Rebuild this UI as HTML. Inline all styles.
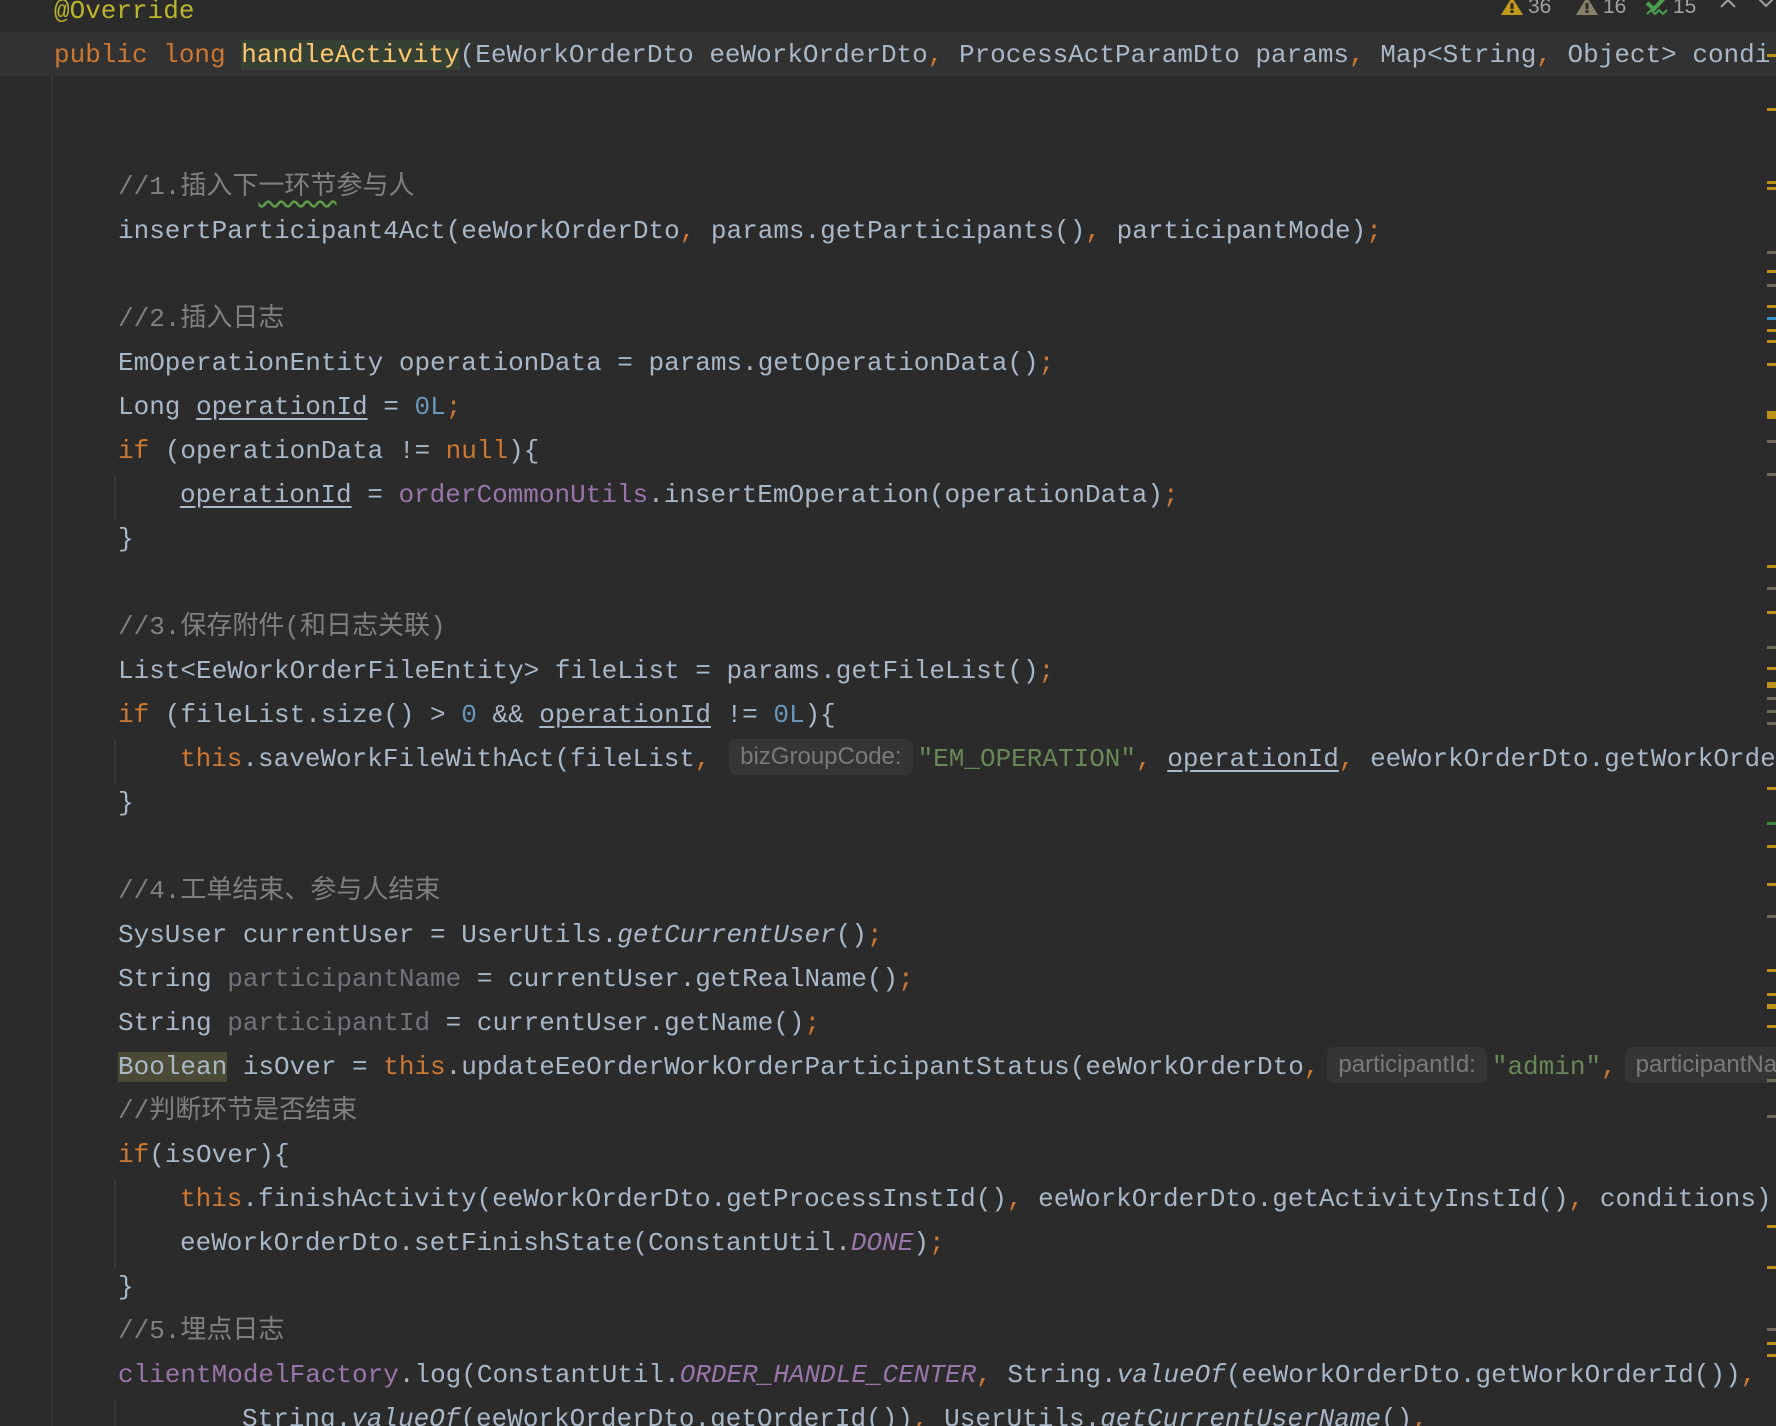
<!DOCTYPE html>
<html><head><meta charset="utf-8">
<style>
html,body{margin:0;padding:0;background:#2b2b2b;}
body{width:1776px;height:1426px;position:relative;overflow:hidden;font-family:"Liberation Mono","Noto Sans CJK SC",monospace;font-size:26px;color:#a9b7c6;}
.wrap{position:absolute;left:0;top:0;width:1776px;height:1426px;overflow:hidden}
.l{position:absolute;left:0;height:44px;line-height:44px;white-space:pre;}
.k{color:#cc7832}.c{color:#808080;font-family:"Liberation Mono","Noto Sans CJK SC",monospace}.a{color:#bbb529}.m{color:#ffc66d}
.n{color:#6897bb}.s{color:#6a8759}.f{color:#9876aa}.i{font-style:italic}.g{color:#72737a}
.u{text-decoration:underline;text-underline-offset:4px}
.h{display:inline-block;font-family:"Liberation Sans",sans-serif;font-size:24px;color:#7a7a7a;background:#353535;border-radius:7px;height:36px;line-height:36px;padding:0 11px;vertical-align:middle;margin:0 5px 0 3px;position:relative;top:-2px}
.guide{position:absolute;width:2px;background:#373737}
.mk{position:absolute;left:1767px;width:9px;height:3px;background:#be9117}
.mg{background:#6e6a5a}
</style></head><body><div class="wrap">
<div style="position:absolute;left:0;top:32px;width:1776px;height:44px;background:#323232"></div>
<div class="guide" style="left:51px;top:76px;height:1351px"></div>
<div class="guide" style="left:114px;top:476px;height:44px"></div>
<div class="guide" style="left:114px;top:740px;height:44px"></div>
<div class="guide" style="left:114px;top:1180px;height:88px"></div>
<div class="guide" style="left:114px;top:1400px;height:28px"></div>

<div class="l" style="top:-11px;left:54px"><span class="a">@Override</span></div>
<div class="l" style="top:33px;left:54px"><span class="k">public long </span><span class="m" style="background:#344134">handleActivity</span>(EeWorkOrderDto eeWorkOrderDto<span class="k">, </span>ProcessActParamDto params<span class="k">, </span>Map&lt;String<span class="k">, </span>Object&gt; condi</div>
<div class="l" style="top:165px;left:118px"><span class="c">//1.插入下<span style="text-decoration:underline wavy #5a9b4b;text-underline-offset:6px">一环节</span>参与人</span></div>
<div class="l" style="top:209px;left:118px">insertParticipant4Act(eeWorkOrderDto<span class="k">, </span>params.getParticipants()<span class="k">, </span>participantMode)<span class="k">;</span></div>
<div class="l" style="top:297px;left:118px"><span class="c">//2.插入日志</span></div>
<div class="l" style="top:341px;left:118px">EmOperationEntity operationData = params.getOperationData()<span class="k">;</span></div>
<div class="l" style="top:385px;left:118px">Long <span class="u">operationId</span> = <span class="n">0L</span><span class="k">;</span></div>
<div class="l" style="top:429px;left:118px"><span class="k">if </span>(operationData != <span class="k">null</span>){</div>
<div class="l" style="top:473px;left:180px"><span class="u">operationId</span> = <span class="f">orderCommonUtils</span>.insertEmOperation(operationData)<span class="k">;</span></div>
<div class="l" style="top:517px;left:118px">}</div>
<div class="l" style="top:605px;left:118px"><span class="c">//3.保存附件(和日志关联)</span></div>
<div class="l" style="top:649px;left:118px">List&lt;EeWorkOrderFileEntity&gt; fileList = params.getFileList()<span class="k">;</span></div>
<div class="l" style="top:693px;left:118px"><span class="k">if </span>(fileList.size() &gt; <span class="n">0</span> &amp;&amp; <span class="u">operationId</span> != <span class="n">0L</span>){</div>
<div class="l" style="top:737px;left:180px"><span class="k">this</span>.saveWorkFileWithAct(fileList<span class="k">, </span><span class="h">bizGroupCode:</span><span class="s">"EM_OPERATION"</span><span class="k">, </span><span class="u">operationId</span><span class="k">, </span>eeWorkOrderDto.getWorkOrderId())<span class="k">;</span></div>
<div class="l" style="top:781px;left:118px">}</div>
<div class="l" style="top:869px;left:118px"><span class="c">//4.工单结束、参与人结束</span></div>
<div class="l" style="top:913px;left:118px">SysUser currentUser = UserUtils.<span class="i">getCurrentUser</span>()<span class="k">;</span></div>
<div class="l" style="top:957px;left:118px">String <span class="g">participantName</span> = currentUser.getRealName()<span class="k">;</span></div>
<div class="l" style="top:1001px;left:118px">String <span class="g">participantId</span> = currentUser.getName()<span class="k">;</span></div>
<div class="l" style="top:1045px;left:118px"><span style="background:#4a4a36">Boolean</span> isOver = <span class="k">this</span>.updateEeOrderWorkOrderParticipantStatus(eeWorkOrderDto<span class="k">,</span><span class="h" style="margin-left:8px">participantId:</span><span class="s">"admin"</span><span class="k">,</span><span class="h" style="margin-left:8px">participantName:</span></div>
<div class="l" style="top:1089px;left:118px"><span class="c">//判断环节是否结束</span></div>
<div class="l" style="top:1133px;left:118px"><span class="k">if</span>(isOver){</div>
<div class="l" style="top:1177px;left:180px"><span class="k">this</span>.finishActivity(eeWorkOrderDto.getProcessInstId()<span class="k">, </span>eeWorkOrderDto.getActivityInstId()<span class="k">, </span>conditions)<span class="k">;</span></div>
<div class="l" style="top:1221px;left:180px">eeWorkOrderDto.setFinishState(ConstantUtil.<span class="f i">DONE</span>)<span class="k">;</span></div>
<div class="l" style="top:1265px;left:118px">}</div>
<div class="l" style="top:1309px;left:118px"><span class="c">//5.埋点日志</span></div>
<div class="l" style="top:1353px;left:118px"><span class="f">clientModelFactory</span>.log(ConstantUtil.<span class="f i">ORDER_HANDLE_CENTER</span><span class="k">, </span>String.<span class="i">valueOf</span>(eeWorkOrderDto.getWorkOrderId())<span class="k">,</span></div>
<div class="l" style="top:1397px;left:242px">String.<span class="i">valueOf</span>(eeWorkOrderDto.getOrderId())<span class="k">, </span>UserUtils.<span class="i">getCurrentUserName</span>()<span class="k">,</span></div>

<div style="position:absolute;left:1490px;top:-4px;height:26px;width:286px;background:#2b2b2b;font-family:'Liberation Sans',sans-serif;font-size:21px;color:#a0a0a0;line-height:24px;white-space:nowrap">
<svg style="position:absolute;left:10px;top:0" width="24" height="20"><path d="M12 1L23 19H1Z" fill="#c39a1b"/><rect x="10.5" y="7" width="3" height="6" fill="#2b2b2b"/><rect x="10.5" y="14" width="3" height="3" fill="#2b2b2b"/></svg>
<span style="position:absolute;left:38px;top:-1px">36</span>
<svg style="position:absolute;left:85px;top:0" width="24" height="20"><path d="M12 1L23 19H1Z" fill="#87806a"/><rect x="10.5" y="7" width="3" height="6" fill="#2b2b2b"/><rect x="10.5" y="14" width="3" height="3" fill="#2b2b2b"/></svg>
<span style="position:absolute;left:113px;top:-1px">16</span>
<svg style="position:absolute;left:155px;top:-2px" width="24" height="22"><path d="M2 9L9 15L21 2" stroke="#4a9f4f" stroke-width="4" fill="none"/><path d="M2 20L6 16L10 20L14 16L18 20L22 16" stroke="#4a9f4f" stroke-width="2" fill="none"/></svg>
<span style="position:absolute;left:183px;top:-1px">15</span>
<svg style="position:absolute;left:228px;top:0" width="20" height="14"><path d="M3 11L10 4L17 11" stroke="#a0a0a0" stroke-width="2" fill="none"/></svg>
<svg style="position:absolute;left:266px;top:0" width="20" height="14"><path d="M3 3L10 10L17 3" stroke="#a0a0a0" stroke-width="2" fill="none"/></svg>
</div>

<div class="mk" style="top:54px"></div><div class="mk" style="top:108px"></div>
<div class="mk" style="top:181px"></div><div class="mk" style="top:187px"></div>
<div class="mk mg" style="top:251px"></div><div class="mk" style="top:270px"></div>
<div class="mk mg" style="top:284px"></div><div class="mk" style="top:305px"></div>
<div class="mk" style="top:317px;background:#3592c4"></div><div class="mk" style="top:329px"></div>
<div class="mk" style="top:340px"></div><div class="mk" style="top:363px"></div>
<div class="mk" style="top:411px;height:8px"></div><div class="mk mg" style="top:440px"></div>
<div class="mk mg" style="top:473px"></div><div class="mk" style="top:565px"></div>
<div class="mk mg" style="top:587px"></div><div class="mk" style="top:611px"></div>
<div class="mk mg" style="top:646px"></div><div class="mk" style="top:667px"></div>
<div class="mk" style="top:682px;height:6px"></div><div class="mk mg" style="top:697px"></div>
<div class="mk mg" style="top:710px"></div><div class="mk mg" style="top:722px"></div>
<div class="mk" style="top:787px"></div><div class="mk" style="top:822px;background:#3b8a3b"></div>
<div class="mk" style="top:845px"></div><div class="mk" style="top:883px"></div>
<div class="mk mg" style="top:915px"></div><div class="mk" style="top:969px"></div>
<div class="mk" style="top:993px"></div><div class="mk" style="top:1004px;height:5px"></div>
<div class="mk" style="top:1025px"></div><div class="mk mg" style="top:1079px"></div>
<div class="mk mg" style="top:1115px"></div><div class="mk" style="top:1225px"></div>
<div class="mk" style="top:1266px"></div><div class="mk mg" style="top:1328px"></div>
<div class="mk" style="top:1342px"></div><div class="mk" style="top:1354px"></div>
</div></body></html>
